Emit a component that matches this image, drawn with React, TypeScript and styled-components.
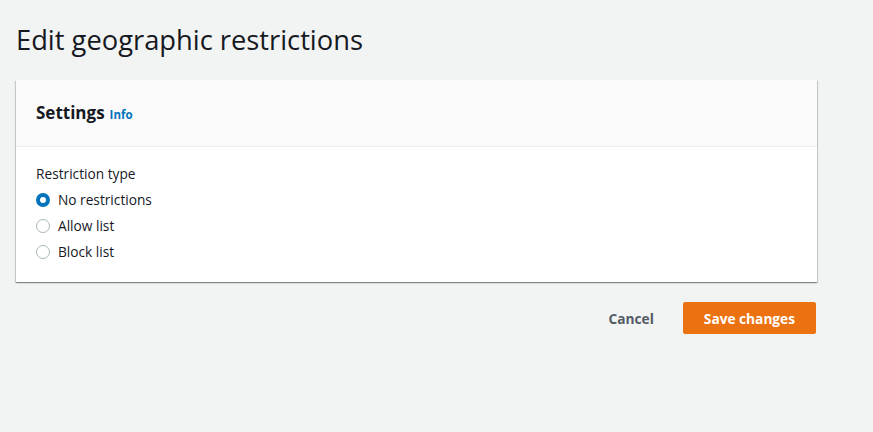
import styled, { createGlobalStyle } from 'styled-components';

const GlobalStyle = createGlobalStyle`
  html, body {
    margin: 0;
    padding: 0;
    background: #f2f3f3;
    font-family: "Open Sans", "Noto Sans", Arial, sans-serif;
    color: #16191f;
  }
`;

const Page = styled.div`
  padding: 22px 56px 0 16px;
  width: 801px;
`;

const Title = styled.h1`
  margin: 0 0 22px 0;
  font-size: 27.3px;
  line-height: 36px;
  font-weight: 400;
  color: #16191f;
`;

const Card = styled.div`
  background: #ffffff;
  box-shadow: 0 1px 1px 0 rgba(0, 28, 36, 0.3), 1px 1px 1px 0 rgba(0, 28, 36, 0.15),
    -1px 1px 1px 0 rgba(0, 28, 36, 0.15);
`;

const CardHeader = styled.div`
  background: #fafafa;
  border-bottom: 1px solid #eaeded;
  padding: 19px 20px;
  display: flex;
  align-items: baseline;
  gap: 5px;
  height: 28px;
`;

const CardTitle = styled.h2`
  margin: 0;
  font-size: 17px;
  line-height: 28px;
  font-weight: 700;
`;

const InfoLink = styled.a`
  font-size: 11.5px;
  font-weight: 700;
  color: #0073bb;
  text-decoration: none;
`;

const CardBody = styled.div`
  padding: 17px 20px 20px;
`;

const FieldLabel = styled.div`
  font-size: 13.7px;
  line-height: 20px;
  margin-bottom: 6px;
`;

const RadioGroup = styled.div`
  display: flex;
  flex-direction: column;
  gap: 6px;
`;

const RadioRow = styled.label`
  display: flex;
  align-items: center;
  gap: 8px;
  font-size: 13.7px;
  line-height: 20px;
`;

const RadioCircle = styled.span<{ $checked: boolean }>`
  box-sizing: border-box;
  width: 14px;
  height: 14px;
  border-radius: 50%;
  border: ${(p) => (p.$checked ? '4px solid #0073bb' : '1px solid #aab7b8')};
  background: #ffffff;
`;

const Actions = styled.div`
  display: flex;
  justify-content: flex-end;
  align-items: center;
  gap: 29px;
  margin-top: 20px;
  padding-right: 1px;
`;

const CancelButton = styled.button`
  background: none;
  border: none;
  font-family: inherit;
  font-size: 13.7px;
  font-weight: 700;
  color: #545b64;
  padding: 4px 0;
  cursor: pointer;
`;

const PrimaryButton = styled.button`
  background: #ec7211;
  border: 1px solid #ec7211;
  border-radius: 2px;
  color: #ffffff;
  font-family: inherit;
  font-size: 13.7px;
  font-weight: 700;
  height: 32px;
  padding: 0 20px;
  cursor: pointer;
`;

const options = [
  { label: 'No restrictions', checked: true },
  { label: 'Allow list', checked: false },
  { label: 'Block list', checked: false },
];

export default function App() {
  return (
    <>
      <GlobalStyle />
      <Page>
        <Title>Edit geographic restrictions</Title>
        <Card>
          <CardHeader>
            <CardTitle>Settings</CardTitle>
            <InfoLink href="#">Info</InfoLink>
          </CardHeader>
          <CardBody>
            <FieldLabel>Restriction type</FieldLabel>
            <RadioGroup>
              {options.map((o) => (
                <RadioRow key={o.label}>
                  <RadioCircle $checked={o.checked} />
                  {o.label}
                </RadioRow>
              ))}
            </RadioGroup>
          </CardBody>
        </Card>
        <Actions>
          <CancelButton>Cancel</CancelButton>
          <PrimaryButton>Save changes</PrimaryButton>
        </Actions>
      </Page>
    </>
  );
}
